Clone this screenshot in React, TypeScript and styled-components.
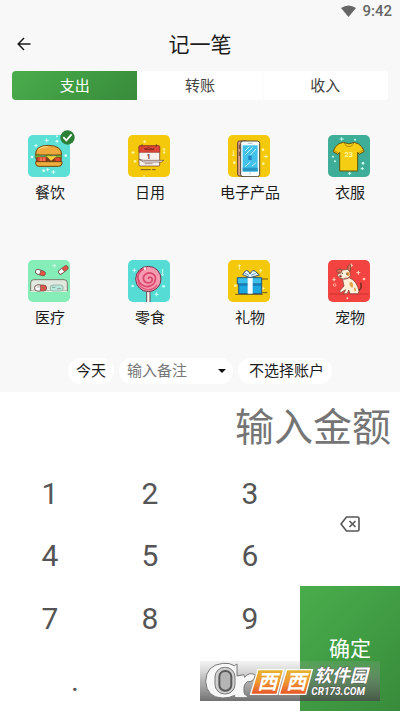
import React, { useState } from "react";
import styled, { createGlobalStyle, css } from "styled-components";

const GlobalStyle = createGlobalStyle`
  *, *::before, *::after { box-sizing: border-box; }
  html, body { margin: 0; padding: 0; }
  body {
    background: #fff;
    color: #1c1c1c;
    font-family: Roboto, "Noto Sans CJK SC", sans-serif;
    font-size: 15px;
  }
  button, input { font: inherit; color: inherit; border: 0; padding: 0; margin: 0; background: none; }
  button { cursor: pointer; }
  svg { display: block; }
`;

const green = "linear-gradient(135deg, #49ad4c, #388b3b)";

const Page = styled.main`
  display: flex;
  flex-direction: column;
  min-height: 100vh;
  position: relative;
`;

const Upper = styled.section`
  background: #f8f8f8;
  padding-bottom: 8px;
`;

const StatusBar = styled.div`
  display: flex;
  justify-content: flex-end;
  align-items: center;
  gap: 6px;
  height: 22px;
  padding-right: 8px;
  color: #666;
  font-size: 15px;
  line-height: 22px;
  font-weight: 500;
`;

const Header = styled.header`
  display: grid;
  grid-template-columns: 48px 1fr 48px;
  align-items: center;
  height: 44px;
`;

const Back = styled.button`
  display: grid;
  place-items: center;
  height: 44px;
`;

const Title = styled.h1`
  margin: 0;
  padding-top: 2px;
  font-size: 21px;
  line-height: 30px;
  font-weight: 400;
  text-align: center;
`;

const Tabs = styled.div`
  display: grid;
  grid-template-columns: repeat(3, 1fr);
  margin: 5px 12px 7px;
  border-radius: 4px;
  overflow: hidden;
  background: #fff;
`;

const Tab = styled.button<{ $active: boolean }>`
  height: 29px;
  padding-top: 2px;
  line-height: 27px;
  color: #444;
  box-shadow: inset 1px 0 #fbfbfb;
  ${(p) => p.$active && css`background: ${green}; color: #fff; box-shadow: none;`}
`;

const Categories = styled.div`
  display: grid;
  grid-template-columns: repeat(4, 1fr);
  grid-auto-rows: 125px;
`;

const Category = styled.button`
  display: flex;
  flex-direction: column;
  align-items: center;
  justify-content: center;
  gap: 5px;
  line-height: 22px;
`;

const TileFrame = styled.span`
  position: relative;
  padding-right: 3px;
`;

const Tile = styled.svg`
  width: 42px;
  height: 42px;
  border-radius: 5px;
`;

const Badge = styled.svg`
  position: absolute;
  top: -5px;
  right: -2px;
`;

const Chips = styled.div`
  display: flex;
  justify-content: center;
  gap: 5px;
  padding-top: 1px;
`;

const Chip = styled.button`
  height: 26px;
  line-height: 26px;
  padding: 0 8px;
  border-radius: 13px;
  background: #fff;
`;

const Account = styled(Chip)`
  padding: 0 8px 0 11px;
`;

const Note = styled.div`
  display: flex;
  align-items: center;
  width: 114px;
  height: 26px;
  padding: 0 6px 0 8px;
  border-radius: 13px;
  background: #fff;
`;

const NoteInput = styled.input`
  flex: 1;
  min-width: 0;
  height: 26px;
  outline: 0;
  &::placeholder { color: #777; opacity: 1; }
`;

const Caret = styled.button`
  display: grid;
  place-items: center;
  width: 10px;
  height: 26px;
`;

const Amount = styled.input`
  width: 100%;
  height: 69px;
  padding: 3px 9px 0;
  font-size: 39px;
  text-align: right;
  color: #444;
  outline: 0;
  &::placeholder { color: #757575; opacity: 1; }
`;

const Keypad = styled.section`
  flex: 1;
  display: grid;
  grid-template-columns: 3fr 1fr;
  min-height: 250px;
`;

const Digits = styled.div`
  display: grid;
  grid-template-columns: repeat(6, 1fr);
  grid-template-rows: repeat(4, 1fr);
`;

const Key = styled.button<{ $wide?: boolean }>`
  grid-column: span ${(p) => (p.$wide ? 3 : 2)};
  padding-top: 3px;
  font-size: 30px;
  line-height: 36px;
  color: #555;
`;

const Actions = styled.div`
  display: grid;
  grid-template-rows: 1fr 1fr;
`;

const Erase = styled.button`
  display: grid;
  place-items: center;
`;

const Confirm = styled.button`
  background: ${green};
  color: #fff;
  font-size: 21px;
  line-height: 30px;
`;

const Watermark = styled.svg`
  position: absolute;
  right: 20px;
  bottom: 10px;
  pointer-events: none;
`;

const Burger = () => (
  <Tile viewBox="23 44 126 126">
    <rect x="23" y="44" width="126" height="126" fill="#5ce0d6" />
    <g fill="#d9fbf7">
      <path d="M79 54v12M73 60h12M47 71v10M42 76h10M99 149v12M93 155h12M82 143v10M77 148h10" stroke="#d9fbf7" strokeWidth="3" />
      <circle cx="110" cy="63" r="4" /><circle cx="35" cy="110" r="4" /><circle cx="70" cy="151" r="4" /><circle cx="136" cy="106" r="4" /><circle cx="110" cy="48" r="3" />
    </g>
    <path d="M46 104Q43 76 84 75Q125 76 124 104Z" fill="#eda93b" stroke="#6a4510" strokeWidth="3" />
    <path d="M54 88Q64 79 82 79" stroke="#fbd578" strokeWidth="4" fill="none" />
    <path d="M45 106q8-6 15 0t16 0t16 0t16 0t16 0v8H45z" fill="#76a92f" stroke="#4c5f18" strokeWidth="2" />
    <rect x="47" y="111" width="77" height="14" rx="3" fill="#843b1b" />
    <path d="M51 110h26v15H53zM103 112h17v12h-13z" fill="#e14a2e" />
    <path d="M79 108h30l-17 13z" fill="#ffd33c" />
    <path d="M62 112v14M71 112v14" stroke="#ff9c80" strokeWidth="3" />
    <path d="M46 124h79v6q-1 8-10 8H56q-9 0-10-8z" fill="#efae3d" stroke="#6a4510" strokeWidth="3" />
  </Tile>
);

const Calendar = () => (
  <Tile viewBox="22 44 126 126">
    <rect x="22" y="44" width="126" height="126" fill="#f4c90b" />
    <path d="M72 59v10M67 64h10M37 92v10M32 97h10M70 164v8" stroke="#fff3a0" strokeWidth="3" />
    <circle cx="43" cy="123" r="4" fill="#fff3a0" />
    <path d="M130 84v17M126 88l4-4 4 4M127 97h7" stroke="#fff3a0" strokeWidth="3" fill="none" />
    <rect x="55" y="77" width="62" height="60" rx="3" fill="#f8f2ef" stroke="#6a342c" strokeWidth="2" />
    <path d="M55 96V79q0-3 3-3h56q3 0 3 3v17z" fill="#df4838" stroke="#8c2d21" strokeWidth="2" />
    <path d="M64 72v7M107 72v7" stroke="#69342d" strokeWidth="3" />
    <path d="M69 84q5 4 10 0t10 0t12 1M72 88h28" stroke="#842b23" strokeWidth="3" fill="none" />
    <text x="84" y="116" textAnchor="middle" fontFamily="Roboto" fontSize="22" fontWeight="700" fill="#742b38">1</text>
    <path d="M55 117l14 3h60l-7 5H69z" fill="#fff" stroke="#633e37" strokeWidth="2" />
    <path d="M72 130h24" stroke="#8b6464" strokeWidth="2" />
    <path d="M60 148h30M94 148h11" stroke="#79591d" strokeWidth="3" />
  </Tile>
);

const Phone = () => (
  <Tile viewBox="35 44 126 126">
    <rect x="35" y="44" width="126" height="126" fill="#f4c90b" />
    <path d="M51 90v17M47 103l4 4 4-4M149 103v11M142 109h13" stroke="#fff3a0" strokeWidth="3" fill="none" />
    <g fill="#fff3a0"><circle cx="54" cy="127" r="4" /><circle cx="140" cy="88" r="4" /><circle cx="141" cy="130" r="4" /></g>
    <rect x="64" y="62" width="30" height="105" rx="5" fill="#dca086" stroke="#60402e" strokeWidth="3" />
    <path d="M69 73v13M69 94v13" stroke="#784b37" strokeWidth="3" />
    <rect x="73" y="62" width="57" height="107" rx="7" fill="#f9fdff" stroke="#514839" strokeWidth="3" />
    <rect x="79" y="75" width="45" height="79" fill="#42c2eb" />
    <path d="M79 142h45v11H79z" fill="#2797c4" />
    <path d="M86 92l13-13M87 103l22-22M102 104l17-18M86 139l16-14M107 137l12-10" stroke="#c6f5ff" strokeWidth="3" />
    <path d="M96 106h10v13H96z" fill="#2380bd" />
    <path d="M95 69h13M101 156v7" stroke="#8ca1aa" strokeWidth="2" />
  </Tile>
);

const Shirt = () => (
  <Tile viewBox="36 44 126 126">
    <rect x="36" y="44" width="126" height="126" fill="#3eae98" />
    <path d="M77 51v10M71 56h12M101 154v10M96 159h10M139 140v9M134 145h10" stroke="#c9fff2" strokeWidth="3" />
    <g fill="#c9fff2"><circle cx="51" cy="109" r="3" /><circle cx="57" cy="123" r="3" /><circle cx="141" cy="129" r="4" /><circle cx="117" cy="58" r="3" /></g>
    <path d="M82 66q17 9 33 0l13 5q9 5 17 22l-15 9-5-6v56H71V96l-6 6-14-8q6-18 18-24z" fill="#f5cd13" stroke="#62550c" strokeWidth="3" />
    <path d="M84 67q4 12 15 12t15-12M53 90l13 7M142 89l-13 8" fill="none" stroke="#9b6d08" strokeWidth="2" />
    <text x="98" y="111" textAnchor="middle" fontFamily="Roboto" fontSize="22" fontWeight="700" fill="#fff8a7">23</text>
  </Tile>
);

const Medicine = () => (
  <Tile viewBox="23 30 126 126">
    <rect x="23" y="30" width="126" height="126" fill="#84edb8" />
    <path d="M102 42v10M97 47h10M48 60v9M43 64h10" stroke="#dcffe9" strokeWidth="3" />
    <g stroke="#66463c" strokeWidth="2">
      <g transform="rotate(18 61 67)"><rect x="45" y="61" width="31" height="14" rx="7" fill="#e75445" /><path d="M60 61h-8q-7 0-7 7t7 7h8z" fill="#fff" /></g>
      <g transform="rotate(-38 129 59)"><rect x="112" y="53" width="33" height="13" rx="6" fill="#e75445" /><path d="M128 53h-9q-7 0-7 6t7 7h9z" fill="#fff" /></g>
      <path d="M31 123V99q0-10 10-10h90q10 0 10 10v24z" fill="#e0e8df" />
      <path d="M31 124h109" stroke="#f5fff6" strokeWidth="3" />
      <rect x="43" y="105" width="36" height="18" rx="9" fill="#e25649" />
      <path d="M60 105h-8q-9 0-9 9t9 9h8z" fill="#fff" />
      <rect x="89" y="105" width="40" height="18" rx="9" fill="#b7e8dc" stroke="#8f9e98" />
    </g>
    <path d="M50 111h7M65 112l7 4M95 112h10M110 116h12" stroke="#728276" strokeWidth="2" />
  </Tile>
);

const Candy = () => (
  <Tile viewBox="23 30 126 126">
    <rect x="23" y="30" width="126" height="126" fill="#54dcd5" />
    <path d="M42 55v12M36 61h12M109 127v12M103 133h12M127 57v20M123 72l4 5 4-5" stroke="#c5fff6" strokeWidth="3" fill="none" />
    <circle cx="37" cy="108" r="4" fill="#c5fff6" /><circle cx="130" cy="109" r="4" fill="#c5fff6" />
    <rect x="79" y="115" width="10" height="45" fill="#fff7ea" stroke="#654b56" strokeWidth="3" />
    <circle cx="84" cy="87" r="38" fill="#f89aaf" stroke="#6f354b" strokeWidth="3" />
    <path d="M84 87q0-7 7-5c9 3 5 17-7 17-15 0-19-17-10-25 12-12 34-2 31 15-3 20-27 27-42 14-20-17-9-47 17-48" fill="none" stroke="#d7466e" strokeWidth="5" />
    <path d="M52 95c8 26 42 33 58 10" fill="none" stroke="#e1577a" strokeWidth="4" />
    <circle cx="74" cy="56" r="4" fill="#fff0ee" />
  </Tile>
);

const Gift = () => (
  <Tile viewBox="35 30 126 126">
    <rect x="35" y="30" width="126" height="126" fill="#f4c90b" />
    <path d="M69 43v16M65 47h8M133 57v10M128 62h10M140 110v10M135 115h10" stroke="#fff3a0" strokeWidth="3" />
    <circle cx="57" cy="107" r="4" fill="#fff3a0" />
    <path d="M124 87h31M57 133h82M138 128h15" stroke="#725617" strokeWidth="3" />
    <path d="M67 101h69v30H67z" fill="#1ca5df" stroke="#285478" strokeWidth="3" />
    <path d="M63 83h73v19H63z" fill="#37bee9" stroke="#285478" strokeWidth="3" />
    <path d="M68 101h67v6H68z" fill="#167bb7" />
    <path d="M94 83h15v48H94z" fill="#f6fdff" />
    <path d="M101 83L79 74l8-11q8-5 14 9 8-15 16-8l12 11z" fill="#e9faff" stroke="#344d69" strokeWidth="3" />
    <path d="M86 70l12 6M118 70l-14 6" stroke="#5c96b9" strokeWidth="3" />
  </Tile>
);

const Dog = () => (
  <Tile viewBox="36 30 126 126">
    <rect x="36" y="30" width="126" height="126" fill="#f44441" />
    <path d="M106 41v10M101 46h10M127 62v12M121 68h12M54 82v12M49 89h10" stroke="#ffd2c0" strokeWidth="3" />
    <g fill="#ffd2c0"><circle cx="144" cy="87" r="4" /><circle cx="94" cy="145" r="3" /></g>
    <circle cx="56" cy="105" r="4" fill="none" stroke="#ffd2c0" strokeWidth="2" />
    <path d="M39 132h119" stroke="#b92d2b" strokeWidth="2" />
    <path d="M123 123q17-4 11-25" fill="none" stroke="#7c3024" strokeWidth="5" />
    <g fill="#fff0d9" stroke="#713d31" strokeWidth="2">
      <path d="M79 83h21q23 10 29 41l-3 7h-24l-4-11-4 11H83l6-12-15 9-3-5 13-15z" />
      <path d="M73 68l-9-7q8-8 17-1l13-2q4-16 8-13 3 5-1 18l2 13q-4 12-18 12l-14-4-8-9z" />
      <path d="M75 69q-13 1-13-8 8-6 17-1z" fill="#d7775a" />
      <path d="M95 59q0-17 8-14 4 6-1 19z" fill="#d7775a" />
    </g>
    <path d="M91 67q9-3 11 4l-4 8q-8-1-7-12zM100 99q7-7 11 4v9q-9 3-11-13zM115 112q7 4 5 12l-7-3z" fill="#e7a34a" />
    <circle cx="79" cy="70" r="2" fill="#43261f" /><circle cx="93" cy="72" r="2" fill="#43261f" />
    <path d="M70 78q3-5 7 0l-3 4zM83 85l14-1" fill="#43261f" stroke="#a23128" strokeWidth="2" />
  </Tile>
);

const categories = [
  { name: "餐饮", Art: Burger },
  { name: "日用", Art: Calendar },
  { name: "电子产品", Art: Phone },
  { name: "衣服", Art: Shirt },
  { name: "医疗", Art: Medicine },
  { name: "零食", Art: Candy },
  { name: "礼物", Art: Gift },
  { name: "宠物", Art: Dog },
];

const Check = () => (
  <Badge width="15" height="15" viewBox="0 0 15 15">
    <circle cx="7.5" cy="7.5" r="7.2" fill="#2c7f36" />
    <path d="M3.3 7.2l3 3.1 5.3-6" fill="none" stroke="#fff" strokeWidth="1.8" />
  </Badge>
);

const SiteLogo = () => (
  <Watermark width="180" height="40" viewBox="600 573 540 120" aria-hidden="true">
    <defs>
      <linearGradient id="shade" x2="0" y2="1">
        <stop stopColor="#aaa" stopOpacity="0.15" />
        <stop offset="0.5" stopColor="#777" stopOpacity="0.55" />
        <stop offset="1" stopColor="#494949" stopOpacity="0.78" />
      </linearGradient>
      <linearGradient id="orange" x2="0" y2="1">
        <stop stopColor="#e8b32f" />
        <stop offset="0.5" stopColor="#ef9630" />
        <stop offset="1" stopColor="#e65429" />
      </linearGradient>
    </defs>
    <rect x="600" y="573" width="540" height="120" fill="url(#shade)" />
    <path
      d="M711 582L703 587Q690 578 668 580Q618 586 617 634Q620 683 668 684Q690 684 704 676V683H742V677Q732 675 732 667V651Q734 640 742 635Q761 638 766 615Q747 604 734 622L731 614L711 618Z"
      fill="#f7f7f7" stroke="#777" strokeWidth="3" strokeLinejoin="round"
    />
    <rect x="645" y="592" width="60" height="80" rx="29" fill="#d0d0d0" stroke="#777" strokeWidth="3" />
    <rect x="658" y="603" width="36" height="59" rx="17" fill="#b4b4b4" stroke="#595959" strokeWidth="6" />
    <path d="M774 599h77l-20 74h-79zM860 599h77l-20 74h-79z" fill="url(#orange)" stroke="#fff" strokeWidth="4" />
    <g fill="#fff" fontStyle="italic">
      <g fontFamily="Noto Sans CJK SC" fontSize="60" fontWeight="700" textAnchor="middle">
        <text x="802" y="658">西</text>
        <text x="888" y="658">西</text>
      </g>
      <g stroke="#555" strokeWidth="3" paintOrder="stroke" fontWeight="700">
        <text x="941" y="636" fontFamily="Noto Sans CJK SC" fontSize="54">软件园</text>
        <text x="934" y="675" fontFamily="Roboto" fontSize="30">CR173.COM</text>
      </g>
    </g>
  </Watermark>
);

export default function App() {
  const [tab, setTab] = useState("支出");
  const [chosen, setChosen] = useState("餐饮");
  const [amount, setAmount] = useState("");
  const press = (k: string) => setAmount((a) => a + k);

  return (
    <Page>
      <GlobalStyle />
      <Upper>
        <StatusBar>
          <svg width="15" height="12" viewBox="0 0 15 12"><path d="M0 3Q7.5-2 15 3L7.5 12z" fill="#666" /></svg>
          <span>9:42</span>
        </StatusBar>
        <Header>
          <Back aria-label="返回">
            <svg width="14" height="14" viewBox="0 0 14 14" fill="none" stroke="#1c1c1c" strokeWidth="1.5"><path d="M13.5 7H1.5M7 1L1.2 7L7 13" /></svg>
          </Back>
          <Title>记一笔</Title>
        </Header>
        <Tabs role="tablist">
          {["支出", "转账", "收入"].map((t) => (
            <Tab key={t} role="tab" aria-selected={t === tab} $active={t === tab} onClick={() => setTab(t)}>{t}</Tab>
          ))}
        </Tabs>
        <Categories>
          {categories.map(({ name, Art }) => (
            <Category key={name} aria-pressed={name === chosen} onClick={() => setChosen(name)}>
              <TileFrame><Art />{name === chosen && <Check />}</TileFrame>
              <span>{name}</span>
            </Category>
          ))}
        </Categories>
        <Chips>
          <Chip>今天</Chip>
          <Note>
            <NoteInput aria-label="备注" placeholder="输入备注" />
            <Caret aria-label="历史备注"><svg width="8" height="4" viewBox="0 0 8 4"><path d="M0 0h8L4 4z" fill="#111" /></svg></Caret>
          </Note>
          <Account>不选择账户</Account>
        </Chips>
      </Upper>
      <Amount aria-label="金额" placeholder="输入金额" value={amount} onChange={(e) => setAmount(e.target.value)} />
      <Keypad>
        <Digits>
          {["1", "2", "3", "4", "5", "6", "7", "8", "9"].map((k) => (
            <Key key={k} onClick={() => press(k)}>{k}</Key>
          ))}
          <Key $wide onClick={() => press(".")}>.</Key>
          <Key $wide onClick={() => press("0")}>0</Key>
        </Digits>
        <Actions>
          <Erase aria-label="删除" onClick={() => setAmount((a) => a.slice(0, -1))}>
            <svg width="20" height="16" viewBox="0 0 20 16" fill="none" stroke="#555" strokeWidth="1.6">
              <path d="M6.5 1H17.5Q19 1 19 2.5V13.5Q19 15 17.5 15H6.5L1 8z" strokeLinejoin="round" />
              <path d="M9.5 5L15.5 11M15.5 5L9.5 11" />
            </svg>
          </Erase>
          <Confirm>确定</Confirm>
        </Actions>
      </Keypad>
      <SiteLogo />
    </Page>
  );
}
